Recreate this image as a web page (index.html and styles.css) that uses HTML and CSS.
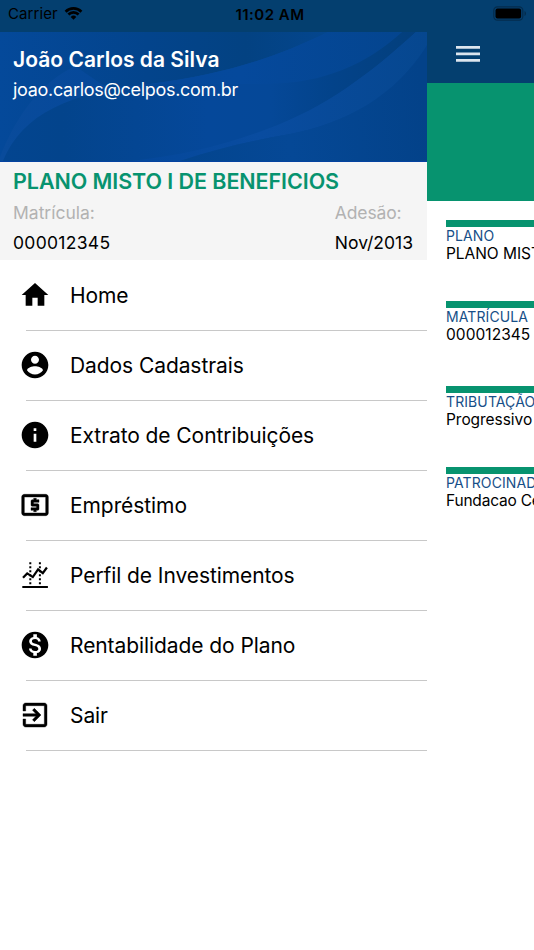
FILE: index.html
```html
<!DOCTYPE html>
<html lang="pt-BR">
<head>
<meta charset="utf-8">
<title>Celpos</title>
<link rel="stylesheet" href="styles.css">
</head>
<body>
<div class="phone">
  <header class="status">
    <span class="carrier">Carrier</span>
    <svg class="wifi" viewBox="0 0 18 13"><path d="M9 12.7 6.200 9.900a4 4 0 0 1 5.600 0z"/><path class="arc" d="M1.100 4.700a11.200 11.200 0 0 1 15.800 0M3.900 7.500a7.200 7.200 0 0 1 10.200 0"/></svg>
    <span class="clock">11:02 AM</span>
    <svg class="battery" viewBox="0 0 34 15"><rect class="case" x=".8" y=".8" width="29" height="13.4" rx="3.6"/><rect x="2.5" y="2.5" width="25.6" height="10" rx="2"/><path class="cap" d="M31.5 5c2 .7 2 4.300 0 5z"/></svg>
  </header>
  <div class="body">
    <aside class="drawer">
      <section class="user">
        <svg class="waves" viewBox="0 0 427 129" preserveAspectRatio="none">
          <defs>
            <linearGradient id="base" x1="0" y1="0" x2="1" y2="1"><stop offset="0" stop-color="#04499a"/><stop offset=".7" stop-color="#044797"/><stop offset="1" stop-color="#034088"/></linearGradient>
            <linearGradient id="top" x1="0" x2="1"><stop offset="0" stop-color="#04499a"/><stop offset=".45" stop-color="#03448c"/><stop offset=".75" stop-color="#034282"/><stop offset="1" stop-color="#04468e"/></linearGradient>
            <linearGradient id="band" gradientUnits="userSpaceOnUse" x1="0" x2="416" y1="0" y2="0"><stop offset="0" stop-color="#034590"/><stop offset=".15" stop-color="#03448c"/><stop offset=".5" stop-color="#05489a"/><stop offset=".65" stop-color="#054898"/><stop offset=".8" stop-color="#03438a"/><stop offset="1" stop-color="#033f7c"/></linearGradient>
            <linearGradient id="mid" x1="0" x2="1"><stop offset="0" stop-color="#094b9b"/><stop offset=".3" stop-color="#05489a"/><stop offset=".6" stop-color="#05499c"/><stop offset="1" stop-color="#04458f"/></linearGradient>
            <linearGradient id="sweep" gradientUnits="userSpaceOnUse" x1="150" x2="427" y1="0" y2="0"><stop offset="0" stop-color="#05489b"/><stop offset=".4" stop-color="#094ca0"/><stop offset="1" stop-color="#06478f"/></linearGradient>
            <linearGradient id="corner" gradientUnits="userSpaceOnUse" x1="180" x2="427" y1="129" y2="100"><stop offset="0" stop-color="#03458e"/><stop offset=".45" stop-color="#054896"/><stop offset="1" stop-color="#034289"/></linearGradient>
          </defs>
          <rect width="427" height="129" fill="url(#base)"/>
          <path fill="url(#top)" d="M0 0H328C275 26 225 42 150 52L0 129Z"/>
          <path fill="url(#mid)" d="M0 125C18 80 42 50 75 34L110 58C130 54 140 53 150 52 225 42 275 26 328 0H402C365 33 325 52 267 53L150 54C70 62 25 82 3 129H0Z"/>
          <path fill="url(#band)" d="M3 129C22 82 70 60 150 52H267C325 51 365 33 402 0H416C370 42 325 76 267 97L210 129Z"/>
          <path fill="url(#sweep)" d="M130 129C180 124 225 113 267 97 325 76 370 42 416 0H427V13C395 65 345 91 290 102 250 109 215 117 180 129Z"/>
          <path fill="url(#corner)" d="M180 129C215 117 250 109 290 102 345 91 395 65 427 13V129Z"/>
        </svg>
        <h1 class="name">João Carlos da Silva</h1>
        <p class="email">joao.carlos@celpos.com.br</p>
      </section>
      <section class="plan">
        <h2 class="plan-name">PLANO MISTO I DE BENEFICIOS</h2>
        <dl class="facts">
          <div><dt>Matrícula:</dt><dd class="number">000012345</dd></div>
          <div><dt class="joined">Adesão:</dt><dd>Nov/2013</dd></div>
        </dl>
      </section>
      <nav class="menu">
        <a class="item"><svg viewBox="0 0 24 24"><path d="M10 20v-6h4v6h5v-8h3L12 3 2 12h3v8z"/></svg><span>Home</span></a>
        <a class="item"><svg viewBox="0 0 24 24"><path d="M12 2C6.480 2 2 6.480 2 12s4.480 10 10 10 10-4.480 10-10S17.520 2 12 2zm0 3c1.660 0 3 1.340 3 3s-1.340 3-3 3-3-1.340-3-3 1.340-3 3-3zm0 14.200c-2.500 0-4.710-1.280-6-3.220.030-1.990 4-3.080 6-3.080 1.990 0 5.970 1.090 6 3.080-1.290 1.940-3.500 3.220-6 3.220z"/></svg><span>Dados Cadastrais</span></a>
        <a class="item"><svg viewBox="0 0 24 24"><path d="M12 2C6.480 2 2 6.480 2 12s4.480 10 10 10 10-4.480 10-10S17.520 2 12 2zm1 15h-2v-6h2v6zm0-8h-2V7h2v2z"/></svg><span>Extrato de Contribuições</span></a>
        <a class="item"><svg class="bold" viewBox="0 0 24 24"><path d="M11 17h2v-1h1c.55 0 1-.45 1-1v-3c0-.55-.45-1-1-1h-3v-1h4V8h-2V7h-2v1h-1c-.55 0-1 .45-1 1v3c0 .55.45 1 1 1h3v1H9v2h2v1zm9-13H4c-1.110 0-1.990.890-1.990 2L2 18c0 1.110.890 2 2 2h16c1.110 0 2-.890 2-2V6c0-1.110-.890-2-2-2zm0 14H4V6h16v12z"/></svg><span>Empréstimo</span></a>
        <a class="item"><svg class="chart" viewBox="0 0 32 32"><path class="base" d="M3.300 28h25.600"/><path class="dots" d="M11.300 3.300v22M20.900 3.300v22"/><path class="trend" d="M4 18.800l4.200-4.400 5.600 3.700 5.300-7.800 4.700 3.800 4.100-5.600"/></svg><span>Perfil de Investimentos</span></a>
        <a class="item"><svg viewBox="0 0 24 24"><path d="M12 2C6.480 2 2 6.480 2 12s4.480 10 10 10 10-4.480 10-10S17.520 2 12 2zm1.410 16.090V20h-2.670v-1.930c-1.710-.36-3.160-1.460-3.270-3.400h1.960c.1 1.050.82 1.870 2.650 1.870 1.960 0 2.400-.98 2.400-1.590 0-.83-.44-1.610-2.670-2.140-2.480-.6-4.180-1.620-4.180-3.670 0-1.720 1.390-2.840 3.110-3.210V4h2.670v1.950c1.860.45 2.790 1.860 2.850 3.390H14.300c-.05-1.110-.64-1.870-2.220-1.870-1.500 0-2.400.68-2.400 1.640 0 .84.65 1.390 2.670 1.910s4.180 1.390 4.180 3.910c-.010 1.830-1.380 2.830-3.120 3.160z"/></svg><span>Rentabilidade do Plano</span></a>
        <a class="item"><svg class="bold" viewBox="0 0 24 24"><path d="M10.090 15.590L11.500 17l5-5-5-5-1.410 1.410L12.670 11H3v2h9.670l-2.580 2.590zM19 3H5c-1.110 0-2 .9-2 2v4h2V5h14v14H5v-4H3v4c0 1.100.890 2 2 2h14c1.100 0 2-.9 2-2V5c0-1.100-.9-2-2-2z"/></svg><span>Sair</span></a>
      </nav>
    </aside>
    <main class="page">
      <div class="topbar"><svg viewBox="0 0 24 16"><path d="M0 0h24v2.700H0zM0 6.500h24v2.700H0zM0 13h24v2.700H0z"/></svg></div>
      <div class="banner"></div>
      <div class="cards">
        <article class="card"><h3>PLANO</h3><p>PLANO MISTO</p></article>
        <article class="card tall"><h3>MATRÍCULA</h3><p class="code">000012345</p></article>
        <article class="card"><h3>TRIBUTAÇÃO</h3><p>Progressivo</p></article>
        <article class="card"><h3>PATROCINADOR</h3><p class="sponsor">Fundacao Celpos</p></article>
      </div>
    </main>
  </div>
</div>
</body>
</html>
```
FILE: styles.css
```css
* { box-sizing: border-box; margin: 0; padding: 0; }
body { font-family: Inter, "Liberation Sans", sans-serif; background: #fff; color: #000; }
.phone { width: 534px; height: 950px; overflow: hidden; display: flex; flex-direction: column; }
.status { height: 32px; flex: none; background: #043f6f; display: grid; grid-template-columns: 49px 19px 1fr 33px; column-gap: 8px; padding: 0 7px 0 8px; }
.carrier { font-size: 15px; line-height: 28px; letter-spacing: .1px; }
.wifi { width: 19px; height: 13px; margin: 7px 0 0 -1px; }
.wifi .arc { fill: none; stroke: #000; stroke-width: 2.700; }
.clock { font-size: 15px; font-weight: 600; line-height: 30px; letter-spacing: .5px; text-align: center; padding-right: 38px; }
.battery { width: 34px; height: 15px; margin-top: 6px; margin-left: -1px; }
.battery .case { fill: none; stroke: #042c4d; stroke-width: 1.200; }
.battery .cap { fill: #042c4d; }
.body { flex: 1; display: flex; min-height: 0; }
.drawer { width: 427px; flex: none; background: #fff; }
.user { height: 130px; position: relative; padding: 12px 13px; color: #fff; border-bottom: 1px solid #0442a0; }
.waves { position: absolute; inset: 0; width: 427px; height: 129px; }
.name, .email { position: relative; white-space: nowrap; }
.name { font-size: 21px; font-weight: 600; line-height: 31px; letter-spacing: .02px; }
.email { font-size: 18px; line-height: 29px; letter-spacing: -.3px; }
.plan { height: 98px; background: #f5f5f5; padding: 4px 14px 0 13px; }
.plan-name { font-size: 21.500px; font-weight: 600; line-height: 31px; letter-spacing: -.07px; color: #07936f; white-space: nowrap; }
.facts { display: flex; justify-content: space-between; font-size: 17.500px; }
.facts dt { color: #b2b2b2; line-height: 32px; }
.facts dd { line-height: 27px; }
.facts .number { letter-spacing: .3px; }
.facts .joined { letter-spacing: -.15px; }
.menu { padding-top: 1px; }
.item { height: 70px; display: flex; align-items: center; gap: 19px; padding-left: 19px; font-size: 21px; letter-spacing: -.08px; white-space: nowrap; background: linear-gradient(#c8c8c8, #c8c8c8) 26px 69px / 401px 1px no-repeat; }
.item svg { width: 32px; height: 32px; margin-top: -2px; flex: none; }
.item span { margin-top: -1px; }
.bold path { stroke: #000; stroke-width: .3; }
.chart path { fill: none; stroke: #000; }
.chart .base { stroke-width: 2; }
.chart .dots { stroke-width: 2; stroke-dasharray: 2 2; }
.chart .trend { stroke-width: 2.200; }
.page { flex: 1; min-width: 0; overflow: hidden; background: #fff; }
.topbar { height: 51px; background: #043f6f; padding: 14px 0 0 29px; }
.topbar svg { display: block; width: 24px; height: 16px; fill: #dce5ee; }
.banner { height: 118px; background: #07936f; }
.cards { padding: 19px 0 0 19px; }
.card { height: 81px; border-top: 7px solid #07936f; white-space: nowrap; }
.card.tall { height: 85px; }
.card h3 { font-size: 14px; font-weight: 400; line-height: 17px; letter-spacing: .1px; color: #174f88; }
.card p { font-size: 15.500px; line-height: 19px; letter-spacing: -.05px; }
.card .code { letter-spacing: .05px; }
.card .sponsor { letter-spacing: -.2px; }
```
